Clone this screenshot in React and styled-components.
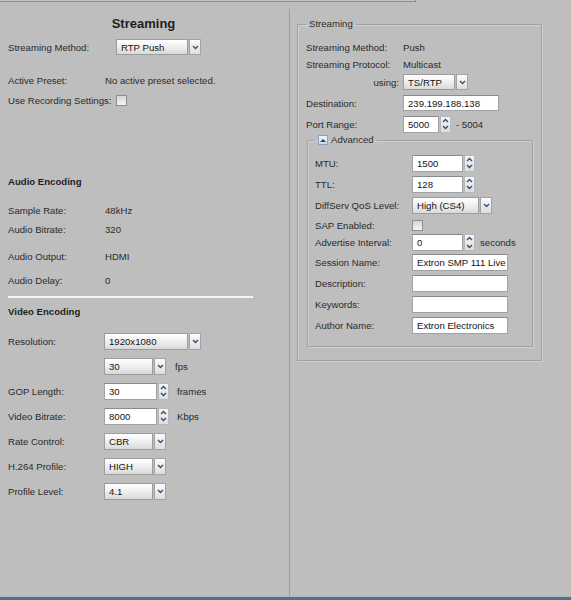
import React from 'react';
import styled, { createGlobalStyle } from 'styled-components';

const GlobalStyle = createGlobalStyle`
    html, body {
        margin: 0;
        padding: 0;
        background: #bebebe;
        font-family: "Liberation Sans", Arial, sans-serif;
        font-size: 9.6px;
        color: #2a2a2a;
    }
`;

const Page = styled.div`
    height: 100vh;
    display: flex;
    flex-direction: column;
    overflow: hidden;
`;

const TopStrip = styled.div`
    width: 416px;
    height: 2px;
    box-sizing: border-box;
    border-bottom: 1px solid #8e8e8e;
    border-right: 1px solid #8e8e8e;
    background: #c4c4c4;
`;

const Columns = styled.div`
    flex: 1;
    display: grid;
    grid-template-columns: 290px 1fr;
    margin-top: 7px;
`;

const LeftCol = styled.div`
    box-sizing: border-box;
    border-right: 1px solid #9d9d9d;
    padding: 6px 0 0 8px;
    display: flex;
    flex-direction: column;
`;

const RightCol = styled.div`
    padding-top: 9px;
`;

const BottomBar = styled.div`
    height: 3px;
    border-top: 1px solid #a9bccb;
    background: #5b6e7c;
`;

const Title = styled.div`
    height: 18px;
    line-height: 18px;
    margin-right: 10px;
    text-align: center;
    font-size: 13px;
    font-weight: bold;
    color: #1e1e1e;
`;

const Heading = styled.div`
    height: 18px;
    line-height: 18px;
    margin-top: ${p => p.$mt || 0}px;
    font-weight: bold;
    color: #1e1e1e;
`;

const Row = styled.div`
    display: flex;
    align-items: center;
    height: ${p => p.$h || 20}px;
    margin-top: ${p => p.$mt || 0}px;
    white-space: nowrap;
`;

const Label = styled.span`
    width: ${p => p.$w || 97}px;
    flex-shrink: 0;
    text-align: ${p => p.$align || 'left'};
    box-sizing: border-box;
    padding-right: ${p => (p.$align === 'right' ? 4 : 0)}px;
`;

const Unit = styled.span`
    margin-left: ${p => p.$gap || 9}px;
`;

const Group = styled.div`
    display: flex;
    flex-direction: column;
    gap: ${p => p.$gap || 0}px;
`;

const Divider = styled.div`
    width: 245px;
    height: 2px;
    margin-top: ${p => p.$mt || 0}px;
    background: #f6f6f6;
`;

/* select */
const SelectBox = styled.div`
    display: flex;
    gap: 1px;
    width: ${p => p.$w}px;
    height: ${p => p.$h || 16}px;
`;

const SelectText = styled.div`
    flex: 1;
    box-sizing: border-box;
    border: 1px solid #9c9c9c;
    padding-left: 4px;
    display: flex;
    align-items: center;
    color: #141414;
    background: linear-gradient(#ffffff, #f1f1f1 45%, #d9d9d9);
    overflow: hidden;
`;

const SelectButton = styled.div`
    width: 12px;
    box-sizing: border-box;
    border: 1px solid #a3a3a3;
    display: flex;
    align-items: center;
    justify-content: center;
    background: linear-gradient(#fbfbfb, #dedede);
`;

const Chevron = ({ up }) => (
    <svg width="7" height="5" viewBox="0 0 7 5">
        <polyline
            points={up ? '1,4 3.5,1.5 6,4' : '1,1 3.5,3.5 6,1'}
            fill="none"
            stroke="#2d4f7f"
            strokeWidth="1.4"
        />
    </svg>
);

const Select = ({ value, w, h }) => (
    <SelectBox $w={w} $h={h}>
        <SelectText>{value}</SelectText>
        <SelectButton><Chevron /></SelectButton>
    </SelectBox>
);

/* text input & spinner */
const Field = styled.input`
    width: ${p => p.$w}px;
    height: ${p => p.$h || 17}px;
    box-sizing: border-box;
    margin: 0;
    border: 1px solid #a2a2a2;
    border-top-color: #8a8a8a;
    padding: 0 0 0 4px;
    background: #fff;
    font: inherit;
    color: #141414;
    outline: none;
`;

const SpinWrap = styled.div`
    display: flex;
    align-items: center;
    gap: 1px;
`;

const SpinArrows = styled.div`
    display: flex;
    flex-direction: column;
    justify-content: space-around;
    width: ${p => p.$w || 11}px;
    height: 17px;
    box-sizing: border-box;
    border: 1px solid #b8b8b8;
    background: linear-gradient(#f6f6f6, #dddddd);
`;

const SpinBtn = styled.div`
    height: 7px;
    display: flex;
    align-items: center;
    justify-content: center;
    svg { width: 7px; height: 5px; }
`;

const Spinner = ({ value, w, h }) => (
    <SpinWrap>
        <Field readOnly value={value} $w={w} $h={h} />
        <SpinArrows>
            <SpinBtn><Chevron up /></SpinBtn>
            <SpinBtn><Chevron /></SpinBtn>
        </SpinArrows>
    </SpinWrap>
);

const Check = styled.span`
    width: 9px;
    height: 9px;
    border: 1px solid #8e8e8e;
    background: linear-gradient(#d6d6d6, #f4f4f4);
`;

/* fieldsets */
const Fieldset = styled.fieldset`
    box-sizing: border-box;
    width: ${p => p.$w}px;
    margin: ${p => p.$margin};
    border: 1px solid #a2a2a2;
    box-shadow: 1px 1px 0 #cfcfcf, inset 1px 1px 0 #cfcfcf;
    padding: 0 7px ${p => p.$pb}px ${p => p.$pl}px;
    min-width: 0;
`;

const Legend = styled.legend`
    padding: 0 3px;
    line-height: 12px;
    height: 12px;
    display: flex;
    align-items: center;
    gap: 3px;
`;

const ToggleIcon = styled.span`
    width: 8px;
    height: 8px;
    border: 1px solid #8aa4c0;
    background: linear-gradient(#eef4fb, #c9daec);
    display: flex;
    align-items: center;
    justify-content: center;
    &::after {
        content: '';
        border-left: 3px solid transparent;
        border-right: 3px solid transparent;
        border-bottom: 3px solid #24477a;
    }
`;

const App = () => {
    const videoRows = [
        { label: '', control: <><Select value="30" w={62} h={17} /><Unit>fps</Unit></> },
        { label: 'GOP Length:', control: <><Spinner value="30" w={53} /><Unit $gap={8}>frames</Unit></> },
        { label: 'Video Bitrate:', control: <><Spinner value="8000" w={53} /><Unit $gap={8}>Kbps</Unit></> },
        { label: 'Rate Control:', control: <Select value="CBR" w={62} h={17} /> },
        { label: 'H.264 Profile:', control: <Select value="HIGH" w={62} h={17} /> },
        { label: 'Profile Level:', control: <Select value="4.1" w={62} h={17} /> },
    ];

    const textRows = [
        { label: 'Session Name:', value: 'Extron SMP 111 Live Stream' },
        { label: 'Description:', value: '' },
        { label: 'Keywords:', value: '' },
        { label: 'Author Name:', value: 'Extron Electronics' },
    ];

    return (
        <>
            <GlobalStyle />
            <Page>
                <TopStrip />
                <Columns>
                    <LeftCol>
                        <Title>Streaming</Title>
                        <Row $mt={4}>
                            <Label $w={108}>Streaming Method:</Label>
                            <Select value="RTP Push" w={85} />
                        </Row>
                        <Row $h={18} $mt={14}>
                            <Label>Active Preset:</Label>
                            <span>No active preset selected.</span>
                        </Row>
                        <Row $h={18} $mt={2}>
                            <Label $w={108}>Use Recording Settings:</Label>
                            <Check />
                        </Row>

                        <Heading $mt={64}>Audio Encoding</Heading>
                        <Row $h={18} $mt={10}><Label>Sample Rate:</Label><span>48kHz</span></Row>
                        <Row $h={18} $mt={1}><Label>Audio Bitrate:</Label><span>320</span></Row>
                        <Row $h={18} $mt={9}><Label>Audio Output:</Label><span>HDMI</span></Row>
                        <Row $h={18} $mt={6}><Label>Audio Delay:</Label><span>0</span></Row>
                        <Divider $mt={7} />

                        <Heading $mt={5}>Video Encoding</Heading>
                        <Group $gap={5}>
                            <Row $mt={10}>
                                <Label $w={96}>Resolution:</Label>
                                <Select value="1920x1080" w={97} h={17} />
                            </Row>
                            {videoRows.map((r, i) => (
                                <Row key={i}>
                                    <Label $w={96}>{r.label}</Label>
                                    {r.control}
                                </Row>
                            ))}
                        </Group>
                    </LeftCol>

                    <RightCol>
                        <Fieldset $w={245} $margin="0 0 0 7px" $pl={8} $pb={13}>
                            <Legend>Streaming</Legend>
                            <Row $h={17} $mt={9}><Label>Streaming Method:</Label><span>Push</span></Row>
                            <Row $h={17}><Label>Streaming Protocol:</Label><span>Multicast</span></Row>
                            <Row $h={18}>
                                <Label $align="right">using:</Label>
                                <Select value="TS/RTP" w={65} />
                            </Row>
                            <Row $h={18} $mt={3}>
                                <Label>Destination:</Label>
                                <Field readOnly value="239.199.188.138" $w={96} $h={16} />
                            </Row>
                            <Row $h={18} $mt={3}>
                                <Label>Port Range:</Label>
                                <Spinner value="5000" w={36} h={17} />
                                <Unit $gap={5}>- 5004</Unit>
                            </Row>

                            <Fieldset $w={226} $margin="1px 0 0 1px" $pl={7} $pb={10}>
                                <Legend><ToggleIcon />Advanced</Legend>
                                <Row $mt={7}><Label>MTU:</Label><Spinner value="1500" w={51} /></Row>
                                <Row $mt={1}><Label>TTL:</Label><Spinner value="128" w={51} /></Row>
                                <Row $mt={1}>
                                    <Label>DiffServ QoS Level:</Label>
                                    <Select value="High (CS4)" w={80} h={17} />
                                </Row>
                                <Row $h={17} $mt={2}><Label>SAP Enabled:</Label><Check /></Row>
                                <Row $h={17}>
                                    <Label>Advertise Interval:</Label>
                                    <Spinner value="0" w={51} />
                                    <Unit $gap={5}>seconds</Unit>
                                </Row>
                                <Group>
                                    {textRows.map((r, i) => (
                                        <Row key={r.label} $h={21} $mt={i === 0 ? 1 : 0}>
                                            <Label>{r.label}</Label>
                                            <Field readOnly value={r.value} $w={96} />
                                        </Row>
                                    ))}
                                </Group>
                            </Fieldset>
                        </Fieldset>
                    </RightCol>
                </Columns>
                <BottomBar />
            </Page>
        </>
    );
};

export default App;
